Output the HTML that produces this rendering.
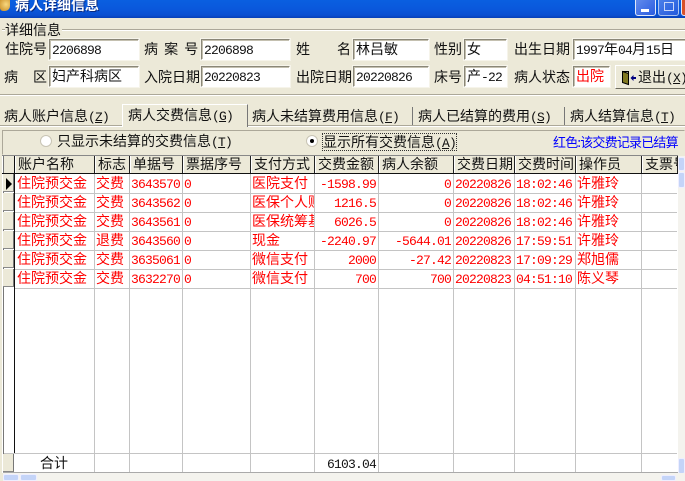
<!DOCTYPE html>
<html lang="zh"><head><meta charset="utf-8">
<style>
html,body{margin:0;padding:0;width:685px;height:481px;overflow:hidden;background:#ece9d8}
body{position:relative;font:14px/16px "WenQuanYi Zen Hei","Noto Sans CJK SC",sans-serif;color:#111}
div{position:absolute;white-space:nowrap}
i{font:normal 13px/16px "Liberation Mono",monospace;letter-spacing:-.8px}
#title{left:0;top:0;width:685px;height:18px;background:linear-gradient(#0a5fe0,#0a58dc 50%,#0a4fd0 85%,#0840b8)}
.tb{top:-6px;width:19px;height:20px;border:1px solid #dfe8fa;border-radius:3px;background:linear-gradient(135deg,#6a92ee,#2a5ce0)}
.in{background:#fff;border:1px solid;border-color:#8a8778 #fff #fff #8a8778;box-shadow:inset 1px 1px 0 #c4c0b0,0 0 0 1px #f6f4ea;height:19px;line-height:18px;padding-left:2px;box-sizing:content-box}
.l{height:16px}
.tab{top:107px;height:18px;line-height:18px}
.ln{background:#aca899}
.v{top:156px;height:316px;width:1px;background:#c4c4c4}
.h{left:15px;width:662px;height:1px;background:#c4c4c4}
.hd{top:156px;height:17px;background:#ece9d8;line-height:17px;padding-left:2px;box-sizing:border-box;overflow:hidden;border-right:1px solid #222;border-left:1px solid #fff}
.ind{left:3px;width:11px;height:18px;background:#ece9d8;border-right:1px solid #777;border-bottom:1px solid #888;box-sizing:border-box}
.c{color:#f00;height:18px;line-height:18px;overflow:hidden}
.r{text-align:right}
.sb{background:#c4d4f8;border:1px solid #eef;box-sizing:border-box;border-radius:2px}
</style></head><body>
<div id="title"></div>
<div style="left:0;top:0;width:10px;height:11px;background:radial-gradient(circle at 60% 40%,#f8d880,#c88a20);border-radius:0 0 5px 3px"></div>
<div style="left:15px;top:-3px;color:#fff;font-weight:bold;text-shadow:1px 1px 0 #0a2a80;line-height:16px">病人详细信息</div>
<div class="tb" style="left:635px"></div><div style="left:641px;top:9px;width:8px;height:3px;background:#fff"></div>
<div class="tb" style="left:658px;opacity:.75"></div><div style="left:664px;top:2px;width:8px;height:7px;border:1px solid #c8d6f8"></div>
<div class="tb" style="left:681px;background:#d8502a"></div>

<div class="ln" style="left:2px;top:29px;width:683px;height:1px"></div><div style="left:2px;top:30px;width:683px;height:1px;background:#fff"></div>
<div class="ln" style="left:0;top:94px;width:685px;height:1px"></div><div style="left:0;top:95px;width:685px;height:1px;background:#fff"></div>
<div style="left:5px;top:22px;background:#ece9d8;padding-right:1px">详细信息</div>

<div class="l" style="left:5px;top:41px">住院号</div>
<div class="in" style="left:49px;top:39px;width:86px"><i>2206898</i></div>
<div class="l" style="left:144px;top:41px;word-spacing:3px">病 案 号</div>
<div class="in" style="left:201px;top:39px;width:85px"><i>2206898</i></div>
<div class="l" style="left:296px;top:41px">姓</div><div class="l" style="left:337px;top:41px">名</div>
<div class="in" style="left:353px;top:39px;width:72px">林吕敏</div>
<div class="l" style="left:434px;top:41px">性别</div>
<div class="in" style="left:464px;top:39px;width:39px">女</div>
<div class="l" style="left:514px;top:41px">出生日期</div>
<div class="in" style="left:573px;top:39px;width:112px"><i>1997</i>年<i>04</i>月<i>15</i>日</div>

<div class="l" style="left:4px;top:69px">病</div><div class="l" style="left:33px;top:69px">区</div>
<div class="in" style="left:49px;top:66px;width:86px">妇产科病区</div>
<div class="l" style="left:144px;top:69px">入院日期</div>
<div class="in" style="left:201px;top:66px;width:85px"><i>20220823</i></div>
<div class="l" style="left:296px;top:69px">出院日期</div>
<div class="in" style="left:353px;top:66px;width:72px"><i>20220826</i></div>
<div class="l" style="left:434px;top:69px">床号</div>
<div class="in" style="left:464px;top:66px;width:39px">产<i>-22</i></div>
<div class="l" style="left:514px;top:69px">病人状态</div>
<div class="in" style="left:573px;top:66px;width:33px;color:#f00">出院</div>

<div style="left:615px;top:65px;width:72px;height:24px;border:1px solid;border-color:#fff #6e6c60 #6e6c60 #fff;box-sizing:border-box"></div>
<svg style="position:absolute;left:621px;top:70px" width="16" height="16"><path d="M1.500 1.500l6 2v11l-6-2z" fill="#807820" stroke="#000"/><path d="M1.500 1.500h6v3" fill="none" stroke="#000"/><path d="M9.500 8l3-3v2h2.500v2h-2.500v2z" fill="#000080"/></svg>
<div style="left:638px;top:69px">退出<i>(<u>X</u>)</i></div>

<div class="ln" style="left:0;top:125px;width:685px;height:1px"></div><div style="left:0;top:126px;width:685px;height:1px;background:#fff"></div>
<div class="tab" style="left:4px">病人账户信息<i>(<u>Z</u>)</i></div>
<div style="left:122px;top:104px;width:126px;height:23px;background:#ece9d8;border-top:1px solid #fff;border-left:1px solid #fff;border-right:1px solid #777;box-sizing:border-box"></div>
<div class="tab" style="left:128px;top:106px">病人交费信息<i>(<u>G</u>)</i></div>
<div class="tab" style="left:252px">病人未结算费用信息<i>(<u>F</u>)</i></div>
<div style="left:412px;top:107px;width:1px;height:18px;background:#777"></div>
<div class="tab" style="left:418px">病人已结算的费用<i>(<u>S</u>)</i></div>
<div style="left:564px;top:107px;width:1px;height:18px;background:#777"></div>
<div class="tab" style="left:570px">病人结算信息<i>(<u>T</u>)</i></div>

<div style="left:2px;top:130px;width:683px;height:25px;border:1px solid;border-color:#aca899 transparent transparent #aca899;box-sizing:border-box"></div>
<div style="left:40px;top:135px;width:12px;height:12px;border-radius:50%;background:#fff;border:1px solid #c8c4b4;box-sizing:border-box"></div>
<div style="left:57px;top:133px">只显示未结算的交费信息<i>(<u>T</u>)</i></div>
<div style="left:306px;top:135px;width:12px;height:12px;border-radius:50%;background:#fff;border:1px solid #c8c4b4;box-sizing:border-box"></div>
<div style="left:310px;top:139px;width:4px;height:4px;border-radius:50%;background:#000"></div>
<div style="left:322px;top:133px;border:1px dotted #333;height:16px">显示所有交费信息<i>(<u>A</u>)</i></div>
<div style="left:553px;top:135px;color:#00f;font-size:13px;line-height:14px;letter-spacing:-.8px">红色:该交费记录已结算</div>

<!-- grid -->
<div style="left:2px;top:155px;width:676px;height:318px;background:#fff"></div>
<div style="left:2px;top:155px;width:676px;height:1px;background:#888"></div>
<div style="left:3px;top:156px;width:12px;height:18px;background:#ece9d8"></div>
<div style="left:14px;top:156px;width:1px;height:298px;background:#111"></div>
<div style="left:3px;top:156px;width:1px;height:316px;background:#777"></div>
<div class="v" style="left:94px"></div><div class="v" style="left:129px"></div><div class="v" style="left:182px"></div><div class="v" style="left:250px"></div><div class="v" style="left:314px"></div><div class="v" style="left:378px"></div><div class="v" style="left:453px"></div><div class="v" style="left:514px"></div><div class="v" style="left:575px"></div><div class="v" style="left:641px"></div>

<div class="hd" style="left:15px;width:80px">账户名称</div>
<div class="hd" style="left:95px;width:35px">标志</div>
<div class="hd" style="left:130px;width:53px">单据号</div>
<div class="hd" style="left:183px;width:68px">票据序号</div>
<div class="hd" style="left:251px;width:64px">支付方式</div>
<div class="hd" style="left:315px;width:64px">交费金额</div>
<div class="hd" style="left:379px;width:75px">病人余额</div>
<div class="hd" style="left:454px;width:61px">交费日期</div>
<div class="hd" style="left:515px;width:61px">交费时间</div>
<div class="hd" style="left:576px;width:66px">操作员</div>
<div class="hd" style="left:642px;width:36px">支票号</div>
<div style="left:2px;top:173px;width:676px;height:1px;background:#111"></div>

<div class="h" style="top:193px"></div><div class="h" style="top:212px"></div><div class="h" style="top:231px"></div><div class="h" style="top:250px"></div><div class="h" style="top:269px"></div><div class="h" style="top:288px"></div><div class="h" style="top:453px;left:4px;width:673px"></div><div class="h" style="top:472px;left:3px;width:675px;background:#aaa"></div>

<div class="ind" style="top:174px"></div><div class="ind" style="top:193px"></div><div class="ind" style="top:212px"></div><div class="ind" style="top:231px"></div><div class="ind" style="top:250px"></div><div class="ind" style="top:269px"></div><div class="ind" style="top:454px"></div>
<svg style="position:absolute;left:6px;top:178px" width="7" height="12"><path d="M0 0l6 6-6 6z" fill="#000"/></svg>

<!-- rows -->
<div class="c" style="left:17px;top:174px">住院预交金</div><div class="c" style="left:96px;top:174px">交费</div><div class="c" style="left:131px;top:174px"><i>3643570</i></div><div class="c" style="left:184px;top:174px"><i>0</i></div><div class="c" style="left:252px;top:174px;width:62px">医院支付</div><div class="c r" style="left:315px;top:174px;width:61px"><i>-1598.99</i></div><div class="c r" style="left:379px;top:174px;width:72px"><i>0</i></div><div class="c" style="left:455px;top:174px"><i>20220826</i></div><div class="c" style="left:516px;top:174px"><i>18:02:46</i></div><div class="c" style="left:577px;top:174px">许雅玲</div>
<div class="c" style="left:17px;top:193px">住院预交金</div><div class="c" style="left:96px;top:193px">交费</div><div class="c" style="left:131px;top:193px"><i>3643562</i></div><div class="c" style="left:184px;top:193px"><i>0</i></div><div class="c" style="left:252px;top:193px;width:62px">医保个人账</div><div class="c r" style="left:315px;top:193px;width:61px"><i>1216.5</i></div><div class="c r" style="left:379px;top:193px;width:72px"><i>0</i></div><div class="c" style="left:455px;top:193px"><i>20220826</i></div><div class="c" style="left:516px;top:193px"><i>18:02:46</i></div><div class="c" style="left:577px;top:193px">许雅玲</div>
<div class="c" style="left:17px;top:212px">住院预交金</div><div class="c" style="left:96px;top:212px">交费</div><div class="c" style="left:131px;top:212px"><i>3643561</i></div><div class="c" style="left:184px;top:212px"><i>0</i></div><div class="c" style="left:252px;top:212px;width:62px">医保统筹基</div><div class="c r" style="left:315px;top:212px;width:61px"><i>6026.5</i></div><div class="c r" style="left:379px;top:212px;width:72px"><i>0</i></div><div class="c" style="left:455px;top:212px"><i>20220826</i></div><div class="c" style="left:516px;top:212px"><i>18:02:46</i></div><div class="c" style="left:577px;top:212px">许雅玲</div>
<div class="c" style="left:17px;top:231px">住院预交金</div><div class="c" style="left:96px;top:231px">退费</div><div class="c" style="left:131px;top:231px"><i>3643560</i></div><div class="c" style="left:184px;top:231px"><i>0</i></div><div class="c" style="left:252px;top:231px;width:62px">现金</div><div class="c r" style="left:315px;top:231px;width:61px"><i>-2240.97</i></div><div class="c r" style="left:379px;top:231px;width:72px"><i>-5644.01</i></div><div class="c" style="left:455px;top:231px"><i>20220826</i></div><div class="c" style="left:516px;top:231px"><i>17:59:51</i></div><div class="c" style="left:577px;top:231px">许雅玲</div>
<div class="c" style="left:17px;top:250px">住院预交金</div><div class="c" style="left:96px;top:250px">交费</div><div class="c" style="left:131px;top:250px"><i>3635061</i></div><div class="c" style="left:184px;top:250px"><i>0</i></div><div class="c" style="left:252px;top:250px;width:62px">微信支付</div><div class="c r" style="left:315px;top:250px;width:61px"><i>2000</i></div><div class="c r" style="left:379px;top:250px;width:72px"><i>-27.42</i></div><div class="c" style="left:455px;top:250px"><i>20220823</i></div><div class="c" style="left:516px;top:250px"><i>17:09:29</i></div><div class="c" style="left:577px;top:250px">郑旭儒</div>
<div class="c" style="left:17px;top:269px">住院预交金</div><div class="c" style="left:96px;top:269px">交费</div><div class="c" style="left:131px;top:269px"><i>3632270</i></div><div class="c" style="left:184px;top:269px"><i>0</i></div><div class="c" style="left:252px;top:269px;width:62px">微信支付</div><div class="c r" style="left:315px;top:269px;width:61px"><i>700</i></div><div class="c r" style="left:379px;top:269px;width:72px"><i>700</i></div><div class="c" style="left:455px;top:269px"><i>20220823</i></div><div class="c" style="left:516px;top:269px"><i>04:51:10</i></div><div class="c" style="left:577px;top:269px">陈义琴</div>

<div style="left:40px;top:455px">合计</div>
<div class="r" style="left:315px;top:455px;width:61px"><i>6103.04</i></div>

<!-- scrollbars -->
<div style="left:678px;top:156px;width:7px;height:316px;background:#f4f3ee"></div>
<div class="sb" style="left:678px;top:157px;width:7px;height:14px"></div>
<div class="sb" style="left:678px;top:172px;width:7px;height:16px"></div>
<div class="sb" style="left:678px;top:458px;width:7px;height:16px"></div>
<div style="left:3px;top:473px;width:682px;height:8px;background:#f4f3ee"></div>
<div class="sb" style="left:3px;top:474px;width:16px;height:7px"></div>
<div class="sb" style="left:20px;top:474px;width:17px;height:7px"></div>
<div class="sb" style="left:661px;top:475px;width:15px;height:6px"></div>
</body></html>
